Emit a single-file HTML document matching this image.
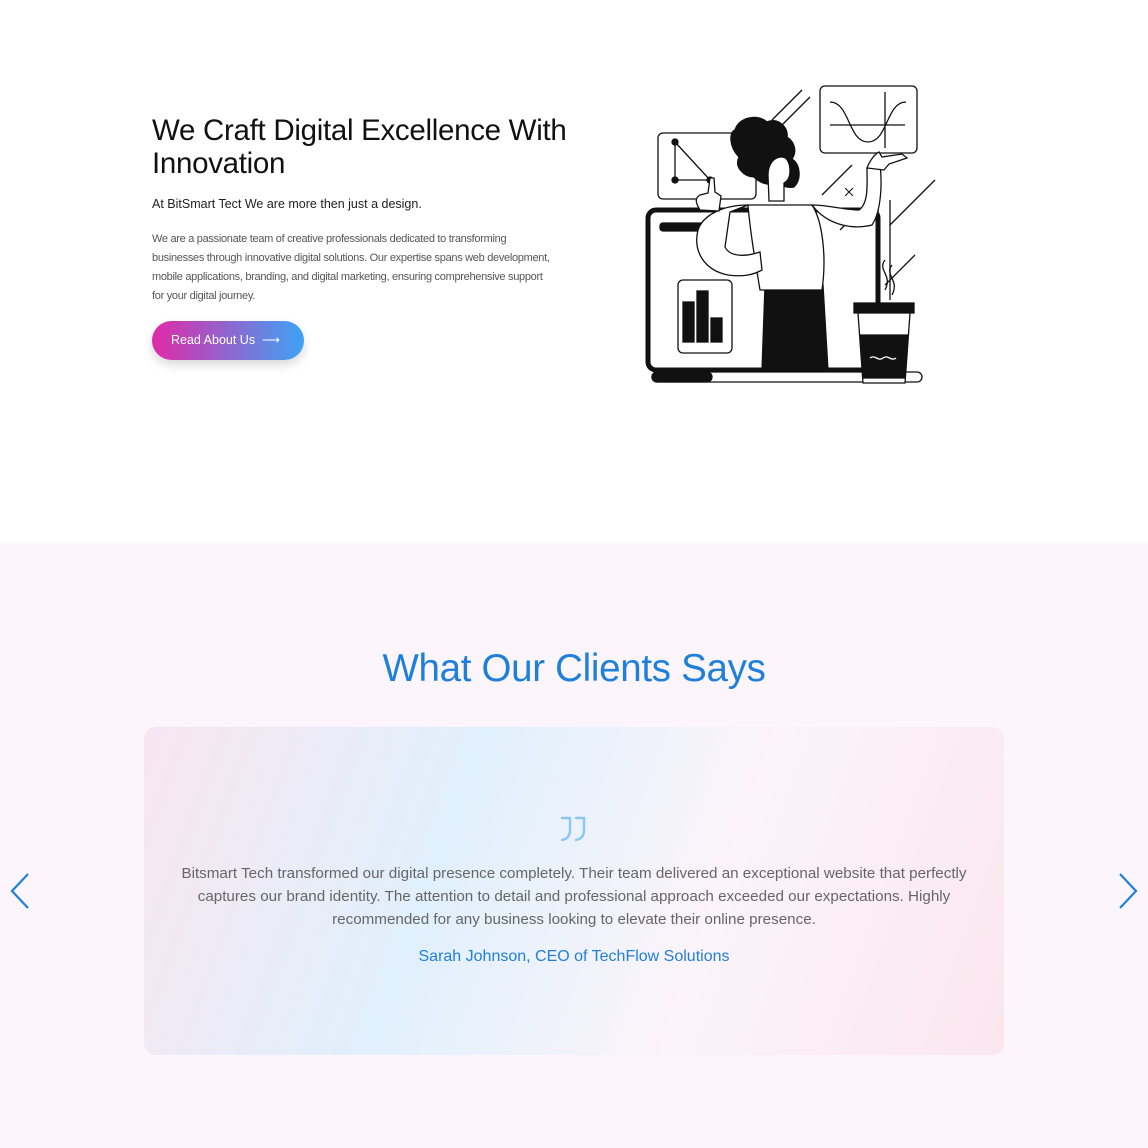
<!DOCTYPE html>
<html><head><meta charset="utf-8"><style>
*{margin:0;padding:0;box-sizing:border-box}
body{width:1148px;height:1148px;background:#fff;font-family:"Liberation Sans",sans-serif;position:relative;overflow:hidden}
.h1{position:absolute;left:152px;top:114px;font-size:29.5px;line-height:33px;color:#111;letter-spacing:-0.3px}
.sub{position:absolute;left:152px;top:197px;font-size:12.5px;color:#222}
.p{position:absolute;left:152px;top:230px;width:400px;font-size:11px;line-height:19px;color:#555;letter-spacing:-0.3px}
.btn{position:absolute;left:152px;top:321px;width:152px;height:39px;border-radius:20px;background:linear-gradient(90deg,#e02aa8,#3da3f5);color:#fff;font-size:12.5px;line-height:39px;padding-left:19px;box-shadow:0 5px 10px rgba(0,0,0,.15)}
.sec{position:absolute;left:0;top:543px;width:1148px;height:605px;background:#fcf5fc}
.t{position:absolute;left:0;width:1148px;top:647px;text-align:center;font-size:38.5px;color:#1f7fdc;letter-spacing:-0.3px}
.card{position:absolute;left:144px;top:727px;width:860px;height:328px;border-radius:12px;background:linear-gradient(110deg,#f8e6f1 0%,#e0f0fc 35%,#fbf4fa 65%,#fbe6ee 100%)}
.q{position:absolute;left:0;width:1148px;top:862px;text-align:center;font-size:15.2px;line-height:23px;color:#666;white-space:nowrap}
.n{position:absolute;left:0;width:1148px;top:948px;text-align:center;font-size:16px;color:#1f7fdc}
</style></head><body>
<div class="h1">We Craft Digital Excellence With<br>Innovation</div>
<div class="sub">At BitSmart Tect We are more then just a design.</div>
<div class="p">We are a passionate team of creative professionals dedicated to transforming businesses through innovative digital solutions. Our expertise spans web development, mobile applications, branding, and digital marketing, ensuring comprehensive support for your digital journey.</div>
<div class="btn">Read About Us &nbsp;⟶</div>
<svg style="position:absolute;left:640px;top:80px" width="300" height="310" viewBox="0 0 300 310" fill="none" stroke="#111" stroke-width="1.3">
<rect x="180" y="6" width="97" height="67" rx="5"/>
<path d="M190 22c20 0 18 40 38 40s18-40 38-40M245 12v56M190 45h75"/>
<rect x="18" y="53" width="98" height="66" rx="5"/>
<path d="M35 62v38h35L35 62"/><circle cx="35" cy="62" r="3" fill="#111"/><circle cx="35" cy="100" r="3" fill="#111"/><circle cx="70" cy="100" r="3" fill="#111"/>
<path d="M132 40l30-30M142 45l28-28M182 115l30-30M200 150l30-30M250 145l45-45M245 205l30-30"/>
<rect x="8" y="130" width="230" height="160" rx="8" stroke-width="5"/>
<rect x="20" y="143" width="60" height="8" rx="3" fill="#111"/>
<rect x="38" y="200" width="54" height="73" rx="5"/>
<rect x="43" y="222" width="11" height="40" fill="#111"/><rect x="57" y="211" width="11" height="51" fill="#111"/><rect x="71" y="238" width="11" height="24" fill="#111"/>
<rect x="12" y="292" width="270" height="10" rx="5"/><rect x="12" y="292" width="60" height="10" rx="5" fill="#111"/>
<path d="M238 120v100M250 120v100"/>
<path d="M95 50c5-15 25-15 32-8 10-5 22 5 20 15 8 5 10 15 5 22 8 5 10 20 2 28-10 2-15-5-20-5-5 5-15 0-20-5-10 0-20-10-15-20-10-10-10-25-4-27z" fill="#111"/>
<path d="M128 95c0-10 5-18 14-18 5 0 8 6 8 14 0 6-2 10-6 12v18h-15z" fill="#fff"/>
<path d="M125 205h58l5 85h-66z" fill="#111"/>
<path d="M108 125h64c10 15 15 50 10 85h-62c-5-30-10-60-12-85z" fill="#fff"/>
<path d="M108 125c-25 0-45 10-50 25-5 20 5 40 30 45 15 2 25 0 34-5l-2-18c-15 5-30 5-35-5l5-35zM172 125c15 20 40 25 60 20 10-15 10-45 8-60l-13 3c0 15 2 35-8 42-15 0-30-5-47-5z" fill="#fff"/>
<path d="M60 130c-5-8-5-12 0-15l8-2 2-15h4l1 14 6 4-2 15z" fill="#fff"/>
<path d="M227 88c3-8 8-14 12-16l3 5 20-3 5 4-18 6-5 6z" fill="#fff"/>
<path d="M214 223h60v10h-60z" fill="#111"/><path d="M218 233h52l-5 70h-42z" fill="#fff"/><path d="M220 255h48l-3 43h-42z" fill="#111"/>
<path d="M230 278c5-4 8 4 13 0s8 4 13 0" stroke="#fff"/>
<path d="M245 180c-8 10 8 15 0 30M252 185c-8 10 8 15 0 30"/>
<path d="M205 108l4 4M213 108l-4 4M205 116l4-4M213 116l-4-4" stroke-width="1"/>
</svg>
<div class="sec"></div>
<div class="t">What Our Clients Says</div>
<div class="card"></div>
<svg style="position:absolute;left:559px;top:815px" width="30" height="28" fill="none" stroke="#8cc6f2" stroke-width="2.4" stroke-linecap="round"><path d="M3 3h8v12c0 6-3 9-8 10M17 3h8v12c0 6-3 9-8 10"/></svg>
<div class="q">Bitsmart Tech transformed our digital presence completely. Their team delivered an exceptional website that perfectly<br>captures our brand identity. The attention to detail and professional approach exceeded our expectations. Highly<br>recommended for any business looking to elevate their online presence.</div>
<div class="n">Sarah Johnson, CEO of TechFlow Solutions</div>
<svg style="position:absolute;left:8px;top:872px" width="24" height="38" fill="none" stroke="#1f7fdc" stroke-width="2.2"><path d="M20 2L4 19l16 17"/></svg>
<svg style="position:absolute;left:1116px;top:872px" width="24" height="38" fill="none" stroke="#1f7fdc" stroke-width="2.2"><path d="M4 2l16 17L4 36"/></svg>
</body></html>
